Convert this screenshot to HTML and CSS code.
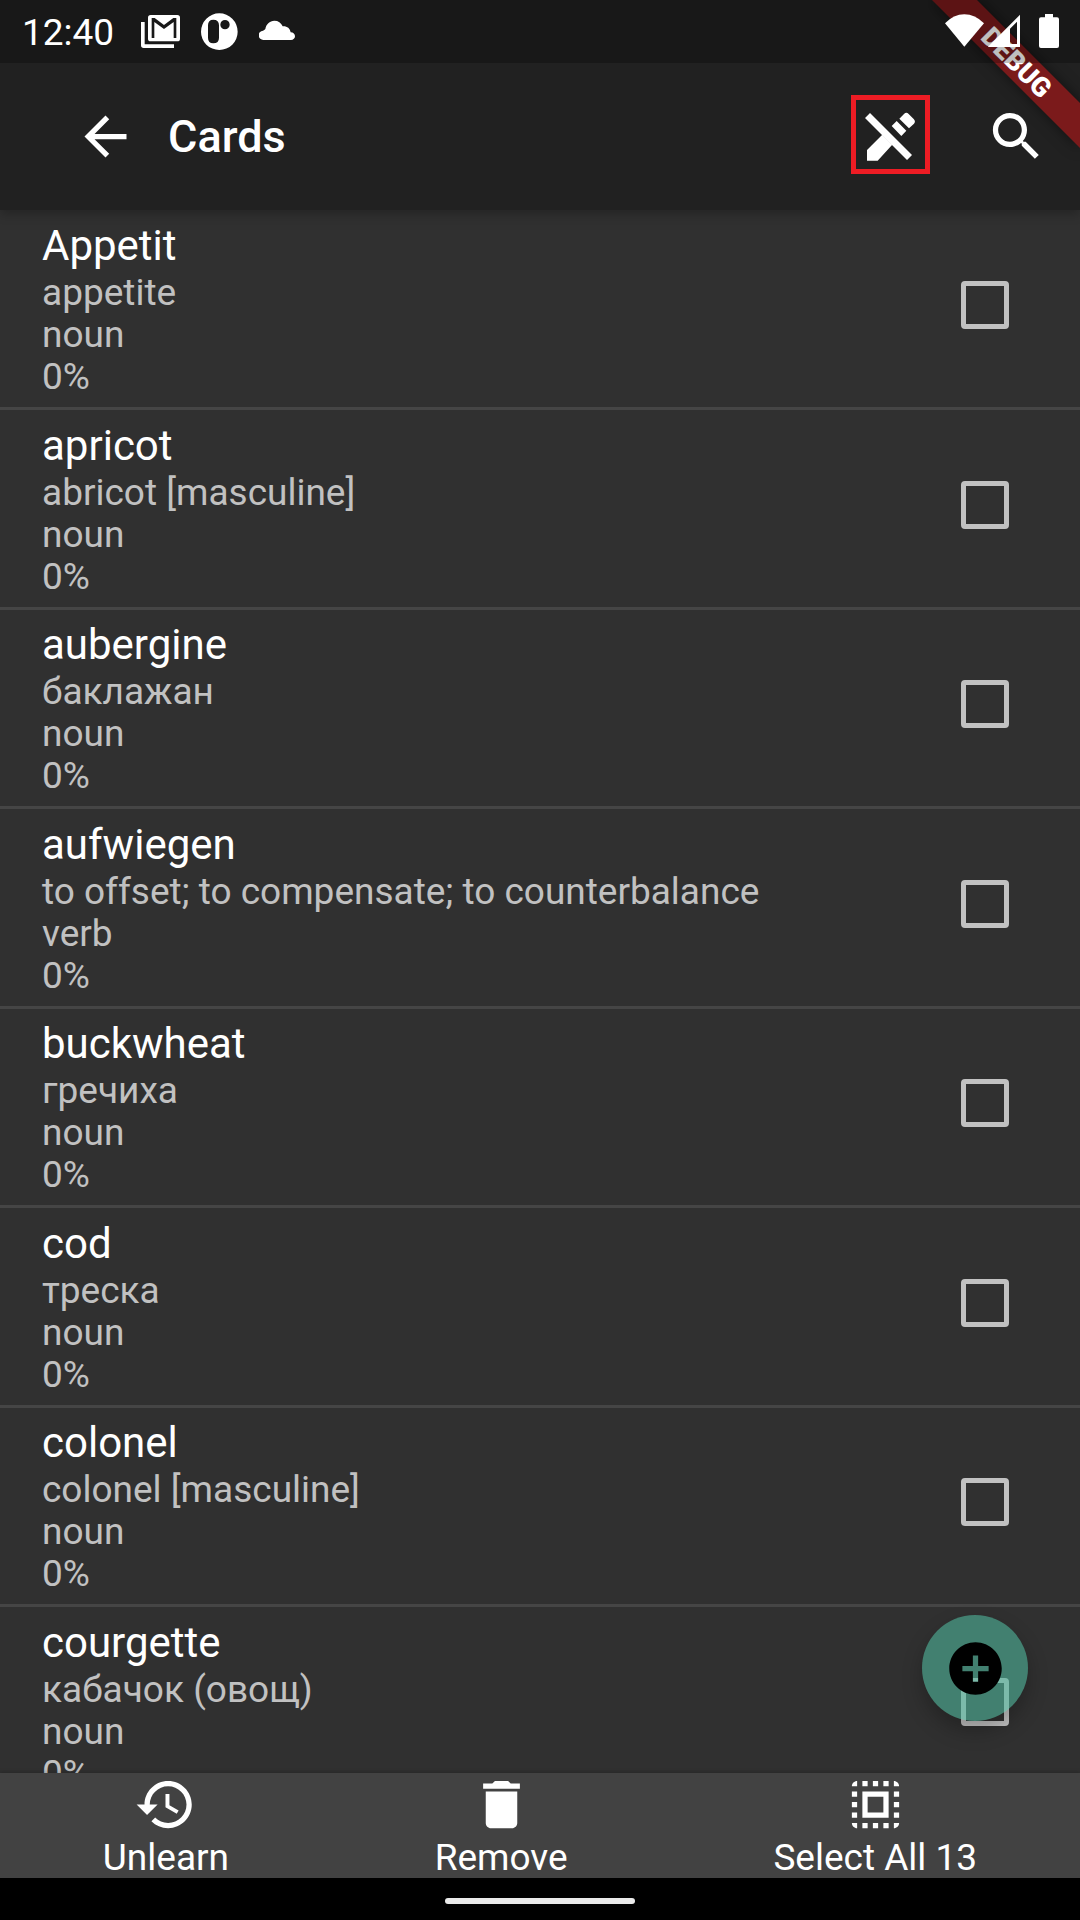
FILE: index.html
```html
<!DOCTYPE html>
<html lang="en">
<head>
<meta charset="utf-8">
<meta name="viewport" content="width=device-width, initial-scale=1">
<title>Cards</title>
<link rel="stylesheet" href="styles.css">
</head>
<body>
<div class="screen">
  <header class="top">
    <div class="status-bar">
      <time class="clock">12:40</time>
      <div class="notifications">
        <svg width="39" height="37" viewBox="423 39 117 111" fill="currentColor" aria-hidden="true">
          <path d="M423 66h11v67h88v11h-91q-8 0-8-8z"/>
          <path fill-rule="evenodd" d="M452 45h80q8 0 8 8v63q0 8-8 8h-80q-8 0-8-8V53q0-8 8-8zM455 54v60h8V66l29 21 29-21v48h8V54h-9l-28 21-28-21z"/>
        </svg>
        <svg width="37" height="37" viewBox="602 39 111 111" fill="currentColor" aria-hidden="true">
          <path fill-rule="evenodd" d="M657 40a55 55 0 1 0 0 110 55 55 0 1 0 0-110zM639 59q17 0 17 17v37q0 17-17 17-16 0-16-17V76q0-17 16-17zM674 60a14 14 0 1 1 0 28 14 14 0 1 1 0-28z"/>
        </svg>
        <svg width="36" height="37" viewBox="777 39 108 111" fill="currentColor" aria-hidden="true">
          <path d="M791 120a14 14 0 0 1-2-28q4-1 7-5c2-14 13-25 27-25 12 0 20 6 25 17 13-1 22 6 24 18 8 0 13 5 13 12 0 6-5 11-12 11z"/>
        </svg>
      </div>
      <div class="system">
        <svg width="39" height="37" viewBox="435 39 117 111" fill="currentColor" aria-hidden="true">
          <path d="M493 140 435 70q26-27 58-27t59 27z"/>
        </svg>
        <svg width="32" height="37" viewBox="564 39 96 111" fill="currentColor" aria-hidden="true">
          <path fill-rule="evenodd" d="M660 44v97h-97zM630 86v46h21V65z"/>
        </svg>
        <svg class="battery" width="20" height="37" viewBox="717 39 60 111" fill="currentColor" aria-hidden="true">
          <path d="M735 42h24v10h12q6 0 6 6v80q0 6-6 6h-48q-6 0-6-6V58q0-6 6-6h12z"/>
        </svg>
      </div>
    </div>
    <div class="app-bar">
      <button class="icon-button" type="button" aria-label="Back">
        <svg class="icon" viewBox="0 0 24 24"><path d="M20 11H7.83l5.59-5.59L12 4l-8 8 8 8 1.41-1.41L7.83 13H20v-2z"/></svg>
      </button>
      <h1 class="title">Cards</h1>
      <button class="icon-button highlighted" type="button" aria-label="Stop editing">
        <svg class="icon" viewBox="177 309 189 189">
          <path d="M195 354l15-15 126 126-15 15zM201 450l45-45 30 30-43 47h-32zM275 378l15-15 29 29-15 16zM298 356l14-14q7-7 14 0l15 15q7 7 1 14l-15 14z"/>
        </svg>
      </button>
      <button class="icon-button" type="button" aria-label="Search">
        <svg class="icon" viewBox="0 0 24 24"><path d="M15.5 14h-.79l-.28-.27C15.41 12.59 16 11.11 16 9.5 16 5.91 13.09 3 9.5 3S3 5.91 3 9.5 5.91 16 9.5 16c1.61 0 3.09-.59 4.23-1.57l.27.28v.79l5 4.99L20.49 19l-4.99-5zm-6 0C7.01 14 5 11.99 5 9.5S7.01 5 9.5 5 14 7.01 14 9.5 11.99 14 9.5 14z"/></svg>
      </button>
    </div>
    <svg class="ribbon" width="180" height="180" viewBox="0 0 180 180">
      <path class="ribbon-band" d="M32 0h45l103 103v45z"/>
      <text class="ribbon-text" x="117" y="72" text-anchor="middle" transform="rotate(45 117 62)">DEBUG</text>
    </svg>
  </header>

  <main class="content">
    <ul class="cards">
      <li><label class="card"><span class="lines"><span class="word">Appetit</span><span>appetite</span><span>noun</span><span>0%</span></span><input class="check" type="checkbox"></label></li>
      <li><label class="card"><span class="lines"><span class="word">apricot</span><span>abricot [masculine]</span><span>noun</span><span>0%</span></span><input class="check" type="checkbox"></label></li>
      <li><label class="card"><span class="lines"><span class="word">aubergine</span><span lang="ru">баклажан</span><span>noun</span><span>0%</span></span><input class="check" type="checkbox"></label></li>
      <li><label class="card"><span class="lines"><span class="word">aufwiegen</span><span>to offset; to compensate; to counterbalance</span><span>verb</span><span>0%</span></span><input class="check" type="checkbox"></label></li>
      <li><label class="card"><span class="lines"><span class="word">buckwheat</span><span lang="ru">гречиха</span><span>noun</span><span>0%</span></span><input class="check" type="checkbox"></label></li>
      <li><label class="card"><span class="lines"><span class="word">cod</span><span lang="ru">треска</span><span>noun</span><span>0%</span></span><input class="check" type="checkbox"></label></li>
      <li><label class="card"><span class="lines"><span class="word">colonel</span><span>colonel [masculine]</span><span>noun</span><span>0%</span></span><input class="check" type="checkbox"></label></li>
      <li><label class="card"><span class="lines"><span class="word">courgette</span><span lang="ru">кабачок (овощ)</span><span>noun</span><span>0%</span></span><input class="check" type="checkbox"></label></li>
    </ul>
    <button class="fab" type="button" aria-label="Add card">
      <svg class="icon" viewBox="0 0 24 24"><path d="M12 2C6.48 2 2 6.48 2 12s4.48 10 10 10 10-4.48 10-10S17.52 2 12 2zm5 11h-4v4h-2v-4H7v-2h4V7h2v4h4v2z"/></svg>
    </button>
  </main>

  <nav class="actions">
    <button class="action" type="button">
      <svg class="icon" viewBox="0 0 24 24"><path d="M13 3c-4.97 0-9 4.03-9 9H1l3.89 3.89.07.14L9 12H6c0-3.87 3.13-7 7-7s7 3.13 7 7-3.13 7-7 7c-1.93 0-3.68-.79-4.94-2.06l-1.42 1.42C8.27 19.99 10.51 21 13 21c4.97 0 9-4.03 9-9s-4.03-9-9-9zm-1 5v5l4.28 2.54.72-1.21-3.5-2.08V8H12z"/></svg>
      <span class="action-label">Unlearn</span>
    </button>
    <button class="action" type="button">
      <svg class="icon" viewBox="0 0 24 24"><path d="M6 19c0 1.1.9 2 2 2h8c1.1 0 2-.9 2-2V7H6v12zM19 4h-3.5l-1-1h-5l-1 1H5v2h14V4z"/></svg>
      <span class="action-label">Remove</span>
    </button>
    <button class="action" type="button">
      <svg class="icon" viewBox="0 0 24 24"><path d="M3 5h2V3c-1.1 0-2 .9-2 2zm0 8h2v-2H3v2zm4 8h2v-2H7v2zM3 9h2V7H3v2zm10-6h-2v2h2V3zm6 0v2h2c0-1.1-.9-2-2-2zM5 21v-2H3c0 1.1.9 2 2 2zm-2-4h2v-2H3v2zM9 3H7v2h2V3zm2 18h2v-2h-2v2zm8-8h2v-2h-2v2zm0 8c1.1 0 2-.9 2-2h-2v2zm0-12h2V7h-2v2zm0 8h2v-2h-2v2zm-4 4h2v-2h-2v2zm0-16h2V3h-2v2zM7 17h10V7H7v10zm2-8h6v6H9V9z"/></svg>
      <span class="action-label">Select All 13</span>
    </button>
  </nav>

  <footer class="gesture-bar"><span class="pill"></span></footer>
</div>
</body>
</html>
```
FILE: styles.css
```css
* {
  box-sizing: border-box;
}

body {
  margin: 0;
  background: #303030;
  color: #fff;
  font-family: Roboto, "Liberation Sans", sans-serif;
  font-size: 37px;
  line-height: 42px;
}

button {
  margin: 0;
  padding: 0;
  border: 0;
  background: none;
  color: inherit;
  font: inherit;
  cursor: pointer;
}

svg {
  display: block;
  flex: none;
}

.icon {
  width: 63px;
  height: 63px;
  fill: currentColor;
}

.screen {
  display: flex;
  flex-direction: column;
  height: 100vh;
  overflow: hidden;
}

/* Status bar and app bar */

.top {
  position: relative;
  z-index: 1;
  flex: none;
  background: #212121;
  box-shadow: 0 4px 10px rgba(0, 0, 0, 0.25);
}

.status-bar {
  position: relative;
  z-index: 2;
  display: flex;
  align-items: center;
  height: 63px;
  padding: 0 21px 0 22px;
  background: rgba(0, 0, 0, 0.25);
}

.clock {
  line-height: 44px;
  padding-top: 2px;
}

.notifications,
.system {
  display: flex;
  align-items: center;
}

.notifications {
  gap: 21px;
  margin-left: 27px;
}

.system {
  gap: 4px;
  margin-left: auto;
}

.battery {
  margin-left: 15px;
}

.app-bar {
  display: flex;
  align-items: center;
  height: 147px;
  padding: 0 32px 0 74px;
}

.title {
  flex: 1;
  margin: 0 0 0 31px;
  font-size: 45px;
  font-weight: 500;
  line-height: 50px;
}

.highlighted {
  margin: 0 55px 4px 0;
  padding: 3px;
  border: 5px solid #ed1c24;
}

.ribbon {
  position: absolute;
  top: 0;
  right: 0;
  z-index: 1;
  pointer-events: none;
}

.ribbon-band {
  fill: #7b1a1b;
  filter: drop-shadow(0 0 7px rgba(0, 0, 0, 0.5));
}

.ribbon-text {
  fill: #fff;
  font-size: 27px;
  font-weight: 900;
}

/* Card list */

.content {
  position: relative;
  flex: 1;
  min-height: 0;
  overflow: hidden;
}

.cards {
  margin: 0;
  padding: 1px 0 0;
  list-style: none;
}

.card {
  display: flex;
  align-items: center;
  justify-content: space-between;
  padding: 9px 71px 9px 42px;
  border-bottom: 3px solid #454545;
}

li:nth-child(even) .card {
  padding-top: 10px;
}

.lines {
  display: flex;
  flex-direction: column;
  color: #c1c1c1;
}

.word {
  color: #fff;
  font-size: 42px;
  line-height: 52px;
}

.check {
  flex: none;
  width: 48px;
  height: 48px;
  margin: 0 0 9px;
  appearance: none;
  border: 5px solid #c1c1c1;
  border-radius: 4px;
}

.fab {
  position: absolute;
  right: 52px;
  bottom: 52px;
  display: grid;
  place-items: center;
  width: 106px;
  height: 106px;
  border-radius: 50%;
  background: rgba(78, 181, 155, 0.6);
  box-shadow: 0 10px 20px rgba(0, 0, 0, 0.25);
  color: #000;
}

/* Bottom actions */

.actions {
  z-index: 1;
  display: flex;
  flex: none;
  justify-content: space-around;
  height: 105px;
  background: #424242;
  box-shadow: 0 -1px 4px rgba(0, 0, 0, 0.2);
}

.action {
  display: flex;
  flex-direction: column;
  align-items: center;
}

.action-label {
  line-height: 44px;
}

.gesture-bar {
  z-index: 1;
  display: flex;
  flex: none;
  align-items: center;
  justify-content: center;
  height: 42px;
  padding-top: 4px;
  background: #000;
}

.pill {
  width: 190px;
  height: 6px;
  border-radius: 3px;
  background: #eaeaea;
}
```
